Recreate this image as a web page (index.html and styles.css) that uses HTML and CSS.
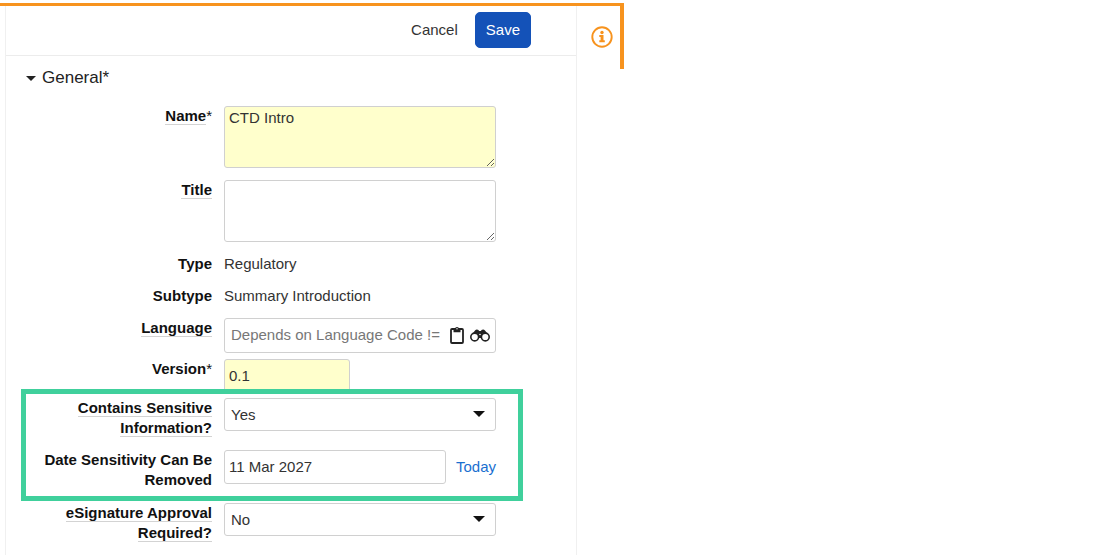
FILE: index.html
```html
<!DOCTYPE html>
<html lang="en">
<head>
    <meta charset="UTF-8">
    <meta name="viewport" content="width=device-width, initial-scale=1.0">
    <title>Document Information</title>
    <link rel="stylesheet" href="styles.css">
</head>
<body>
    <div class="viewer">
        <form class="info-panel">
            <header class="panel-header">
                <button type="button" class="cancel-btn">Cancel</button>
                <button type="submit" class="save-btn">Save</button>
            </header>
            <h2 class="section-title">
                <button type="button" class="section-toggle" aria-expanded="true">General*</button>
            </h2>

            <div class="row">
                <label for="name"><span class="hint">Name</span><span class="star">*</span></label>
                <textarea id="name" class="required">CTD Intro</textarea>
            </div>
            <div class="row">
                <label for="title"><span class="hint">Title</span></label>
                <textarea id="title"></textarea>
            </div>
            <div class="row">
                <span class="label">Type</span>
                <span>Regulatory</span>
            </div>
            <div class="row">
                <span class="label">Subtype</span>
                <span>Summary Introduction</span>
            </div>
            <div class="row tight">
                <label for="language"><span class="hint">Language</span></label>
                <div class="lookup">
                    <input type="text" id="language" placeholder="Depends on Language Code !=">
                    <button type="button" class="icon-btn" aria-label="Paste">
                        <svg width="14" height="18" viewBox="0 0 14 18">
                            <rect x="1" y="3" width="12" height="14" rx="1" fill="none" stroke="#222" stroke-width="1.800"/>
                            <path d="M3.500 6.200V3h1.500a2 2 0 0 1 4 0h1.500v3.200z" fill="#222"/>
                            <circle cx="7" cy="2.800" r=".7" fill="#fff"/>
                        </svg>
                    </button>
                    <button type="button" class="icon-btn" aria-label="Search">
                        <svg width="20" height="13" viewBox="0 0 20 13">
                            <path d="M1.500 6 5 1.500Q6.500 0 8.500 1L9 2h2l.5-1Q13.500 0 15 1.500L18.500 6l-5 2-2 1h-3L6 8z" fill="#222"/>
                            <circle cx="4.700" cy="8" r="3.900" fill="#fff" stroke="#222" stroke-width="1.600"/>
                            <circle cx="15.300" cy="8" r="3.900" fill="#fff" stroke="#222" stroke-width="1.600"/>
                            <circle cx="10" cy="5.500" r=".8" fill="#fff"/>
                        </svg>
                    </button>
                </div>
            </div>
            <div class="row version-row">
                <label for="version">Version<span class="star">*</span></label>
                <input type="text" id="version" class="required short" value="0.1">
            </div>

            <div class="highlight">
                <div class="row">
                    <label for="sensitive"><span class="hint">Contains Sensitive Information?</span></label>
                    <div class="select">
                        <select id="sensitive">
                            <option selected>Yes</option>
                            <option>No</option>
                        </select>
                    </div>
                </div>
                <div class="row">
                    <label for="removed">Date Sensitivity Can Be Removed</label>
                    <div class="date">
                        <input type="text" id="removed" value="11 Mar 2027">
                        <a href="#">Today</a>
                    </div>
                </div>
            </div>

            <div class="row">
                <label for="esign"><span class="hint">eSignature Approval Required?</span></label>
                <div class="select">
                    <select id="esign">
                        <option>Yes</option>
                        <option selected>No</option>
                    </select>
                </div>
            </div>
        </form>
        <aside class="side-tabs">
            <button type="button" class="icon-btn" aria-label="Information">
                <svg width="22" height="22" viewBox="0 0 22 22">
                    <circle cx="11" cy="11" r="9.700" fill="none" stroke="#f7931e" stroke-width="1.900"/>
                    <circle cx="11" cy="6.500" r="1.700" fill="#f7931e"/>
                    <path d="M8.300 9h4.200v5.300h1.300v2H8.300v-2h1.300V11H8.300z" fill="#f7931e"/>
                </svg>
            </button>
        </aside>
    </div>
</body>
</html>
```
FILE: styles.css
```css
* {
    box-sizing: border-box;
}

body {
    margin: 0;
    padding-top: 3px;
    background-color: #fff;
    color: #333;
    font-family: "Liberation Sans", Arial, sans-serif;
    font-size: 15px;
    line-height: 20px;
}

button, input, select, textarea {
    font: inherit;
    color: inherit;
}

button {
    padding: 0;
    border: none;
    background: none;
    cursor: pointer;
}

.viewer {
    display: flex;
    align-items: flex-start;
    max-width: 624px;
    border-top: 3px solid #f7931e;
}

.info-panel {
    flex: 1;
    margin-left: 5px;
    border: solid #f0f0f0;
    border-width: 0 1px;
}

.panel-header {
    display: flex;
    justify-content: flex-end;
    align-items: center;
    gap: 17px;
    height: 50px;
    padding-right: 45px;
    padding-bottom: 2px;
    border-bottom: 1px solid #ececec;
}

.save-btn {
    padding: 7px 10px;
    border: 1px solid #1452b8;
    border-radius: 5px;
    background-color: #1452b8;
    color: #fff;
}

.section-title {
    margin: 0;
    padding: 12px 20px 18px;
    font-size: 17px;
    font-weight: normal;
}

.section-toggle {
    display: flex;
    align-items: center;
    gap: 6px;
    color: #222;
}

.section-toggle::before {
    content: "";
    border: 5px solid transparent;
    border-top-color: #222;
    border-bottom: none;
}

.row {
    display: grid;
    grid-template-columns: 172px 272px;
    gap: 12px;
    align-items: start;
    margin-bottom: 12px;
    padding-left: 34px;
}

.row.tight {
    margin-bottom: 6px;
}

.row label, .label {
    color: #111;
    font-weight: bold;
    text-align: right;
}

.hint {
    border-bottom: 1px solid #d3d3d3;
}

.star {
    font-weight: normal;
}

textarea, input, select, .lookup {
    display: block;
    width: 100%;
    border: 1px solid #d0d0d0;
    border-radius: 3px;
    background-color: #fff;
    outline: 0;
}

textarea {
    height: 62px;
    padding: 1px 4px;
}

input {
    height: 34px;
    padding: 0 4px 1px;
}

.required {
    background-color: #ffffcc;
}

.short {
    width: 126px;
}

.lookup {
    display: flex;
    align-items: center;
    gap: 6px;
    height: 35px;
    padding: 0 5px 1px 6px;
}

.lookup input {
    flex: 1;
    min-width: 0;
    height: 30px;
    padding: 0 0 1px;
    border: none;
}

.lookup input::placeholder {
    color: #777;
    opacity: 1;
}

.icon-btn {
    display: flex;
}

.select {
    position: relative;
}

.select select {
    height: 33px;
    padding: 0 6px;
    appearance: none;
}

.select::after {
    content: "";
    position: absolute;
    top: 13px;
    right: 11px;
    border: 6px solid transparent;
    border-top-color: #111;
    border-bottom: none;
    pointer-events: none;
}

.date {
    display: flex;
    align-items: center;
    gap: 10px;
}

.date input {
    flex: 1;
    min-width: 0;
}

.date a {
    color: #1a6fd0;
    text-decoration: none;
}

.version-row {
    margin-bottom: 0;
}

/* sits over the bottom edge of the version field */
.highlight {
    position: relative;
    margin: -4px 53px 2px 15px;
    padding: 4px 0 6px;
    border: 5px solid #40d09c;
    background-color: #fff;
}

.highlight .row {
    padding-left: 14px;
}

.highlight .row:last-child {
    margin-bottom: 0;
}

.side-tabs {
    display: flex;
    align-items: center;
    width: 47px;
    height: 63px;
    padding: 0 0 2px 14px;
    border-right: 4px solid #f7931e;
}
```
